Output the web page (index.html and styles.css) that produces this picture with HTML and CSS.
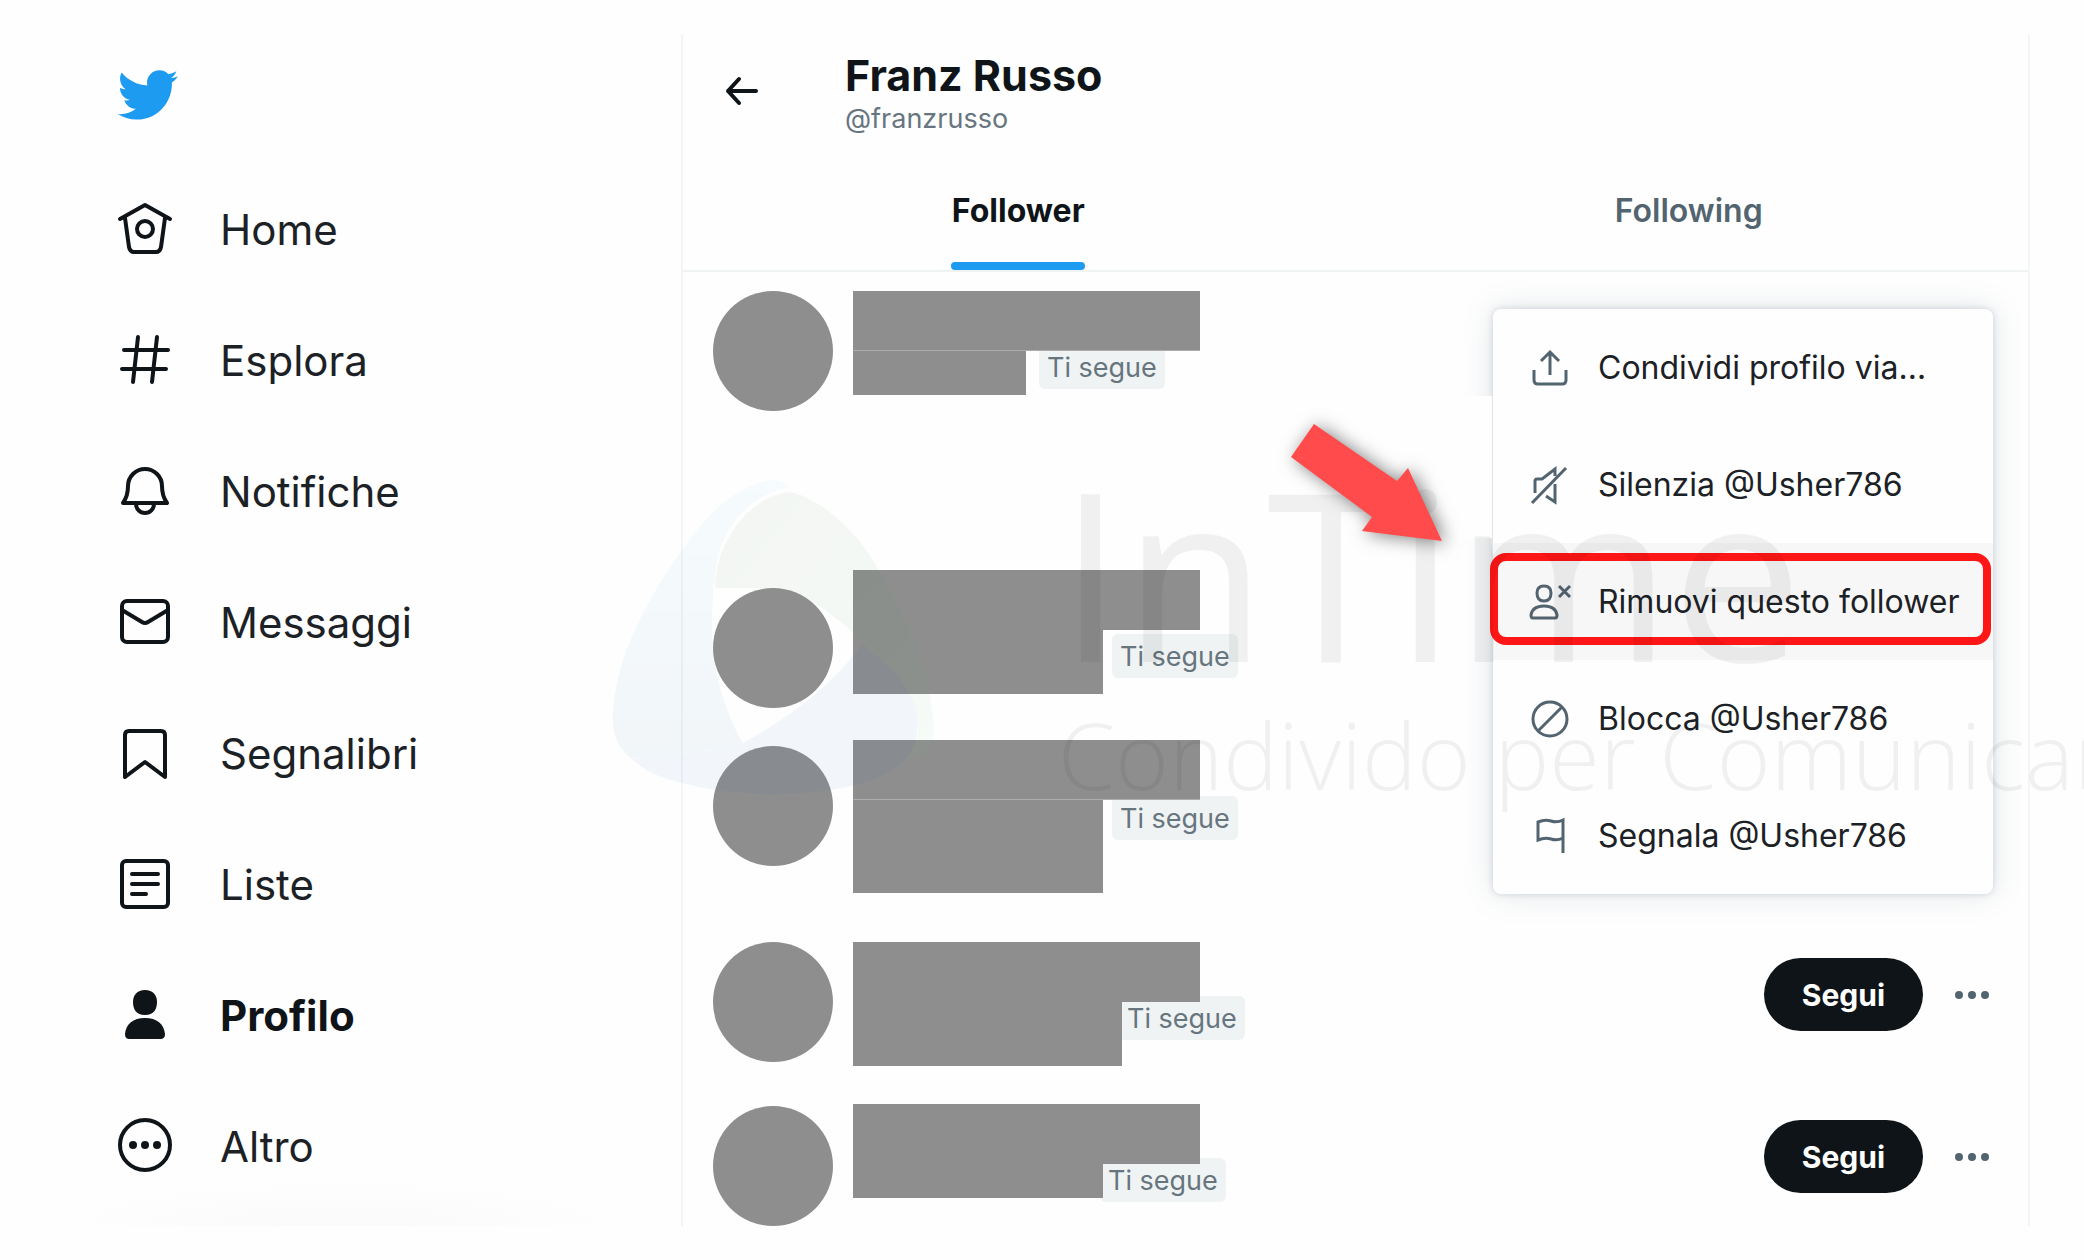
FILE: index.html
```html
<!DOCTYPE html>
<html lang="it">
<head>
<meta charset="utf-8">
<meta name="viewport" content="width=device-width, initial-scale=1">
<title>Follower di Franz Russo</title>
<link rel="stylesheet" href="styles.css">
</head>
<body>
<div class="page">
  <header class="sidebar">
    <a class="logo" href="#" aria-label="Twitter">
      <svg viewBox="0 0 24 24"><path d="M23.643 4.937c-.835.37-1.732.62-2.675.733.962-.576 1.7-1.49 2.048-2.578-.9.534-1.897.922-2.958 1.13-.85-.904-2.06-1.47-3.4-1.47-2.572 0-4.658 2.086-4.658 4.66 0 .364.042.718.12 1.06-3.873-.195-7.304-2.05-9.602-4.868-.4.69-.63 1.49-.63 2.342 0 1.616.823 3.043 2.072 3.878-.764-.025-1.482-.234-2.11-.583v.06c0 2.257 1.605 4.14 3.737 4.568-.392.106-.803.162-1.227.162-.3 0-.593-.028-.877-.082.593 1.85 2.313 3.198 4.352 3.234-1.595 1.25-3.604 1.995-5.786 1.995-.376 0-.747-.022-1.112-.065 2.062 1.323 4.51 2.093 7.14 2.093 8.57 0 13.255-7.098 13.255-13.254 0-.2-.005-.402-.014-.602.91-.658 1.7-1.477 2.323-2.41z"/></svg>
    </a>
    <nav class="nav" aria-label="Principale">
      <a class="nav-item" href="#"><svg class="nav-icon" viewBox="0 0 54 54"><path d="M2 16 27 2l25 14M7 15l4 29q1 5 5 5h22q4 0 5-5l4-29"/><circle cx="27" cy="26" r="8"/></svg><span>Home</span></a>
      <a class="nav-item" href="#"><svg class="nav-icon" viewBox="0 0 54 54"><path d="M20 3 15 48M39 3l-5 45M6 16h44M4 35h44"/></svg><span>Esplora</span></a>
      <a class="nav-item" href="#"><svg class="nav-icon" viewBox="0 0 54 54"><path d="M5 38q5-7 5-17a17 17 0 0 1 34 0q0 10 5 17zM18 39a9 9 0 0 0 18 0"/></svg><span>Notifiche</span></a>
      <a class="nav-item" href="#"><svg class="nav-icon" viewBox="0 0 54 54"><rect x="4" y="5" width="46" height="41" rx="5"/><path d="m4 14 20 12q3 2 6 0l20-12"/></svg><span>Messaggi</span></a>
      <a class="nav-item" href="#"><svg class="nav-icon" viewBox="0 0 54 54"><path d="M7 50V8q0-4 4-4h32q4 0 4 4v42L27 35z"/></svg><span>Segnalibri</span></a>
      <a class="nav-item" href="#"><svg class="nav-icon" viewBox="0 0 54 54"><rect x="4" y="3" width="46" height="46" rx="4"/><path d="M14 16h26M14 26h26M14 36h14"/></svg><span>Liste</span></a>
      <a class="nav-item nav-item-active" href="#" aria-current="page"><svg class="nav-icon nav-icon-solid" viewBox="0 0 54 54"><path d="M27 1c8 0 12 5 12 12s-3 13-12 13-12-6-12-13S19 1 27 1zM27 29c12 0 19 6 20 16 0 4-2 5-5 5H12c-3 0-5-1-5-5 1-10 8-16 20-16z"/></svg><span>Profilo</span></a>
      <a class="nav-item" href="#"><svg class="nav-icon" viewBox="0 0 54 54"><circle cx="27" cy="25" r="25"/><g class="dots"><circle cx="15" cy="25" r="4"/><circle cx="27" cy="25" r="4"/><circle cx="39" cy="25" r="4"/></g></svg><span>Altro</span></a>
    </nav>
  </header>

  <main class="main">
    <div class="profile-bar">
      <button class="back" type="button" aria-label="Indietro"><svg viewBox="0 0 34 30"><path d="M14 3 3 15l11 12M3 15h28"/></svg></button>
      <div>
        <h1 class="profile-name">Franz Russo</h1>
        <p class="profile-handle">@franzrusso</p>
      </div>
    </div>
    <nav class="tabs" aria-label="Elenchi">
      <a class="tab tab-active" href="#" aria-current="page">Follower</a>
      <a class="tab" href="#">Following</a>
    </nav>

    <ul class="followers">
      <li class="follower follower-open">
        <span class="avatar"></span>
        <div class="identity">
          <span class="block-name block-seam"></span>
          <div class="line"><span class="block-handle block-xs"></span><span class="badge badge-gap">Ti segue</span></div>
        </div>
        <div class="menu" role="menu">
          <button class="menu-item" type="button" role="menuitem"><svg class="menu-icon" viewBox="0 0 36 36"><path d="M18 25V2M9 11l9-9 9 9M2 20v10q0 4 4 4h24q4 0 4-4V20"/></svg>Condividi profilo via…</button>
          <button class="menu-item" type="button" role="menuitem"><svg class="menu-icon" viewBox="0 0 36 36"><path d="M0 36 34 1M3 26V14q0-2 2-2h5L23 2v7M14 29l9 6V17"/></svg>Silenzia @Usher786</button>
          <button class="menu-item menu-item-current" type="button" role="menuitem"><svg class="menu-icon" viewBox="0 0 36 36"><path d="M12 2c6 0 7 4 7 7s-1 8-7 8-7-5-7-8 1-7 7-7zM12 22c7 0 12 3 13 9q0 3-2 3H1q-2 0-2-3c1-6 6-9 13-9zM27 2l11 11M38 2l-11 11"/></svg>Rimuovi questo follower</button>
          <button class="menu-item" type="button" role="menuitem"><svg class="menu-icon" viewBox="0 0 36 36"><circle cx="18" cy="18" r="17"/><path d="M6 30 30 6"/></svg>Blocca @Usher786</button>
          <button class="menu-item" type="button" role="menuitem"><svg class="menu-icon" viewBox="0 0 36 36"><path d="M31 35V2q-6 3-12 1T6 4v18q7-3 13-1t12-1"/></svg>Segnala @Usher786</button>
        </div>
        <svg class="pointer" viewBox="0 0 152 118" aria-hidden="true"><path d="M23 0 106 57 117 44 151 117 71 107 81 93 0 33z"/></svg>
      </li>
      <li class="follower follower-low">
        <span class="avatar"></span>
        <div class="identity">
          <span class="block-name"></span>
          <div class="line"><span class="block-handle block-md"></span><span class="badge badge-drop">Ti segue</span></div>
        </div>
      </li>
      <li class="follower follower-tall">
        <span class="avatar"></span>
        <div class="identity">
          <span class="block-name block-seam"></span>
          <div class="line"><span class="block-handle block-lg"></span><span class="badge">Ti segue</span></div>
        </div>
      </li>
      <li class="follower">
        <span class="avatar"></span>
        <div class="identity">
          <span class="block-name"></span>
          <div class="line"><span class="block-handle block-wide"></span><span class="badge badge-tight">Ti segue</span></div>
        </div>
        <div class="actions"><button class="follow" type="button">Segui</button><button class="more" type="button" aria-label="Altre opzioni"><span></span><span></span><span></span></button></div>
      </li>
      <li class="follower">
        <span class="avatar"></span>
        <div class="identity">
          <span class="block-name"></span>
          <div class="line"><span class="block-handle block-sm"></span><span class="badge badge-tight">Ti segue</span></div>
        </div>
        <div class="actions"><button class="follow" type="button">Segui</button><button class="more" type="button" aria-label="Altre opzioni"><span></span><span></span><span></span></button></div>
      </li>
    </ul>
  </main>

  <div class="watermark">
    <svg class="watermark-logo" viewBox="0 0 322 316" aria-hidden="true">
      <defs>
        <linearGradient id="wg" x1="0" y1="0" x2="1" y2="1"><stop offset="0" stop-color="#3d6a2a"/><stop offset="1" stop-color="#6fd08a"/></linearGradient>
        <linearGradient id="wc" x1="0" y1="0" x2="0" y2="1"><stop offset="0" stop-color="#6fd0f0"/><stop offset="1" stop-color="#1e6f98"/></linearGradient>
      </defs>
      <path fill="url(#wc)" d="M160 0C128 4 98 28 68 73 40 112 22 148 11 180 4 204 0 226 1 243c0 14 8 28 20 37 20-6 38-6 57-7 18-2 36-4 53-10C113 232 100 190 100 150c0-32 2-54 6-73C114 40 146 12 178 7 172 2 166 0 160 0z"/>
      <path fill="url(#wg)" d="M178 12c-38 4-62 40-70 65-3 10-5 20-5 31h62c24 2 56 26 90 57 22 22 42 36 51 75 2 16-4 28-11 40l16-3c9-10 12-20 10-34-2-50-18-92-60-163C236 40 200 16 178 12z"/>
      <path fill="#2d6cc5" d="M251 163c22 20 34 32 40 40 8 12 14 24 15 37 0 16-4 28-11 37-16 18-40 28-77 33-40 6-96 6-140-5-28-6-46-14-57-25 20-6 38-6 57-7 18-2 36-4 53-10 44-24 90-58 120-100z"/>
    </svg>
    <div class="watermark-text">
      <p class="watermark-title">InTime</p>
      <p class="watermark-tagline">Condivido per Comunicare</p>
    </div>
  </div>
</div>
</body>
</html>
```
FILE: styles.css
```css
* { box-sizing: border-box; }

body {
  margin: 0;
  background: #fefefe;
  color: #0f1419;
  font-family: Inter, "Liberation Sans", sans-serif;
  overflow-x: hidden;
}

h1, p, ul { margin: 0; padding: 0; }
ul { list-style: none; }
a { color: inherit; text-decoration: none; }
button { border: 0; padding: 0; background: none; color: inherit; font: inherit; cursor: pointer; }

.page {
  position: relative;
  display: grid;
  grid-template-columns: 681px minmax(0, 1fr);
  padding: 34px 54px 34px 0;
  overflow: hidden;
}

/* Sidebar */
.sidebar {
  padding: 29px 0 0 115px;
  background: radial-gradient(ellipse 280px 44px at 340px 100%, #fafafa, #fefefe);
}
.logo { display: block; width: 64px; height: 64px; }
.logo svg { width: 64px; height: 64px; fill: #1d9bf0; }
.nav { display: flex; flex-direction: column; padding: 37px 0 0 3px; }
.nav-item {
  display: flex;
  align-items: center;
  gap: 48px;
  height: 131px;
  font-size: 42px;
  color: #1c2126;
}
.nav-icon {
  width: 54px;
  height: 54px;
  overflow: visible;
  fill: none;
  stroke: #0f1419;
  stroke-width: 4;
  stroke-linecap: round;
  stroke-linejoin: round;
}
.nav-icon-solid, .nav-icon .dots { fill: #0f1419; stroke: none; }
.nav-item-active { font-weight: 700; color: #0f1419; }

/* Profile column */
.main {
  border-left: 2px solid #f3f5f6;
  border-right: 2px solid #f3f5f6;
}
.profile-bar { display: flex; align-items: flex-start; height: 136px; padding: 15px 42px; }
.back { width: 34px; height: 30px; margin: 27px 86px 0 0; }
.back svg { display: block; fill: none; stroke: #0f1419; stroke-width: 4; stroke-linecap: round; stroke-linejoin: round; }
.profile-name { font-size: 43px; line-height: 52px; font-weight: 700; }
.profile-handle { font-size: 27px; line-height: 36px; color: #67757f; }

.tabs { display: flex; height: 102px; padding-right: 4px; border-bottom: 2px solid #eff3f4; }
.tab {
  position: relative;
  display: flex;
  flex: 1;
  justify-content: center;
  padding-top: 21px;
  font-size: 32px;
  line-height: 40px;
  font-weight: 600;
  color: #536471;
}
.tab-active { color: #0f1419; font-weight: 700; }
.tab-active::after {
  content: "";
  position: absolute;
  bottom: 0;
  width: 134px;
  height: 8px;
  border-radius: 4px;
  background: #1d9bf0;
}

/* Follower list */
.followers { padding: 19px 39px 0 30px; }
.follower { position: relative; display: flex; align-items: flex-start; gap: 20px; min-height: 162px; }
.follower:last-child { min-height: 122px; }
.follower:last-child .avatar { margin-top: 2px; }
.follower-open { min-height: 279px; }
.follower-low { min-height: 170px; }
.follower-low .avatar { margin-top: 18px; }
.follower-tall { min-height: 202px; }
.follower-tall .avatar { margin-top: 6px; }
.avatar { flex: none; width: 120px; height: 120px; border-radius: 50%; background: #8e8e8e; }
.identity { flex: 1; }
.block-name { position: relative; z-index: 1; display: block; width: 347px; height: 60px; background: #8e8e8e; }
.block-seam { border-bottom: 1px solid #adadad; }
.line { display: flex; align-items: flex-start; gap: 9px; }
.block-handle { position: relative; z-index: 1; background: #8e8e8e; }
.block-xs { width: 173px; height: 44px; }
.block-sm { width: 250px; height: 34px; }
.block-md { width: 250px; height: 64px; }
.block-lg { width: 250px; height: 93px; }
.block-wide { width: 269px; height: 64px; }
.badge {
  height: 44px;
  margin-top: -4px;
  padding: 0 8px;
  border-radius: 6px;
  background: #eff3f4;
  color: #67757f;
  font-size: 27px;
  line-height: 46px;
}
.badge-gap { margin-top: -6px; margin-left: 4px; }
.badge-drop { margin-top: 4px; }
.badge-tight { margin-top: -6px; margin-left: -12px; }

.actions { display: flex; align-items: center; gap: 32px; padding-top: 16px; }
.follow {
  width: 159px;
  height: 73px;
  border-radius: 37px;
  background: #0f1419;
  color: #fff;
  font-size: 30px;
  font-weight: 700;
}
.more { display: flex; gap: 5px; }
.more span { width: 8px; height: 8px; border-radius: 50%; background: #536471; }

/* Options menu */
.menu {
  position: absolute;
  z-index: 3;
  top: 18px;
  right: -4px;
  width: 500px;
  border-radius: 8px;
  background: #fefefe;
  box-shadow: 0 0 30px rgba(101, 119, 134, 0.2), 0 0 6px rgba(101, 119, 134, 0.25);
}
.menu::before {
  content: "";
  position: absolute;
  top: 87px;
  left: -42px;
  width: 41px;
  height: 142px;
  background: #fefefe;
}
.menu-item {
  display: flex;
  align-items: center;
  gap: 30px;
  width: 100%;
  height: 117px;
  padding: 0 0 0 39px;
  font-size: 32px;
  color: #1c2126;
  white-space: nowrap;
}
.menu-item-current { position: relative; background: #f7f7f7; }
.menu-item-current::after {
  content: "";
  position: absolute;
  inset: 10px 2px 15px -3px;
  border: 8px solid #ff1616;
  border-radius: 16px;
}
.menu-icon {
  flex: none;
  width: 36px;
  height: 36px;
  overflow: visible;
  fill: none;
  stroke: #536471;
  stroke-width: 3;
}
.pointer {
  position: absolute;
  z-index: 6;
  top: 133px;
  right: 546px;
  width: 152px;
  height: 118px;
  overflow: visible;
  fill: #ff4b4b;
  filter: drop-shadow(4px 2px 9px rgba(0, 0, 0, 0.5));
}

/* Watermark over the whole page */
.watermark {
  position: absolute;
  z-index: 5;
  top: 480px;
  left: 612px;
  display: flex;
  gap: 124px;
  opacity: 0.05;
  pointer-events: none;
  font-family: "Open Sans", "Noto Sans", sans-serif;
  color: #000;
  white-space: nowrap;
}
.watermark-logo { width: 322px; height: 316px; }
.watermark-title { font-size: 234px; line-height: 184px; font-weight: 500; }
.watermark-tagline { padding-top: 26px; font-size: 92px; line-height: 130px; font-weight: 300; }
```
